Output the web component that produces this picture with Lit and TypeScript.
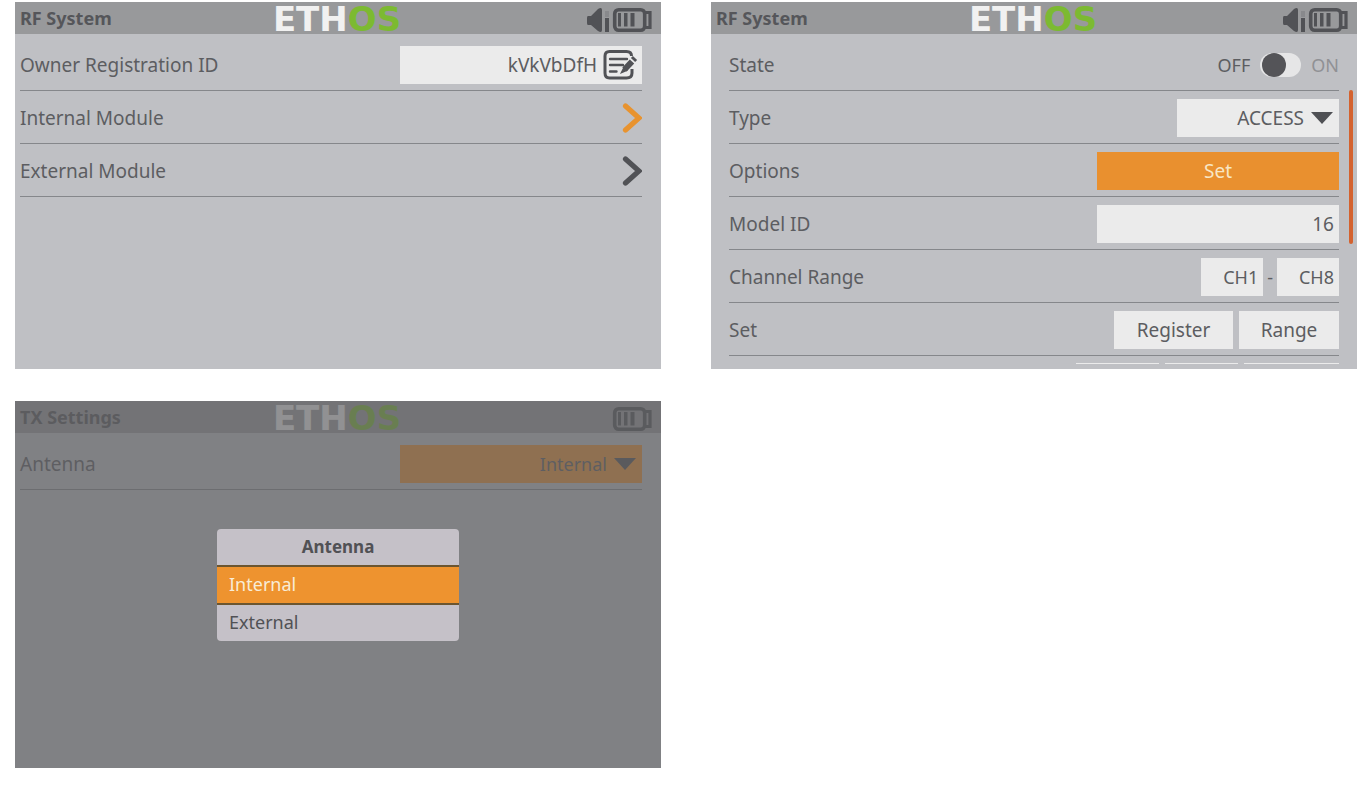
import { LitElement, html, css, svg, nothing } from "lit";
import { customElement, property, state } from "lit/decorators.js";

const controls = css`
  .row {
    box-sizing: border-box;
    display: flex;
    align-items: center;
    justify-content: space-between;
    gap: 6px;
    width: 100%;
    min-height: 53px;
    padding: 8px 0 6px;
    border: 0;
    border-bottom: 1px solid #85878b;
    background: none;
    color: inherit;
    font: inherit;
    text-align: left;
  }
  .label {
    flex: 1;
    font-size: 19px;
  }
  .field,
  .button {
    box-sizing: border-box;
    height: 38px;
    margin: 0;
    border: 0;
    border-radius: 0;
    background: #ebebeb;
    color: #5c5d61;
    font: inherit;
    font-size: 19px;
    outline: none;
  }
  .field {
    padding: 0 5px;
    text-align: right;
  }
  .small {
    font-size: 18px;
  }
  .button {
    padding: 0;
    text-align: center;
  }
  .wide {
    width: 242px;
  }
  .wrap {
    display: grid;
  }
  .wrap > * {
    grid-area: 1 / 1;
  }
  .pick {
    appearance: none;
    padding: 0 35px 0 8px;
    text-align-last: right;
  }
  .caret {
    justify-self: end;
    align-self: center;
    margin-right: 6px;
    pointer-events: none;
  }
  .accent {
    background: #e9902f;
  }
`;

const caret = html`<svg class="caret" width="22" height="12" viewBox="0 0 22 12" aria-hidden="true">
  <path d="M0 0H22L11 12Z" fill="#4f5054" />
</svg>`;

@customElement("device-screen")
class DeviceScreen extends LitElement {
  @property() heading = "";
  @property({ type: Boolean }) muted = false;

  static styles = css`
    :host {
      position: relative;
      display: flex;
      flex-direction: column;
      min-width: 0;
      aspect-ratio: 44 / 25;
      background: #bfc0c4;
    }
    .bar {
      display: grid;
      grid-template-columns: 1fr auto 1fr;
      align-items: center;
      flex: none;
      height: 32px;
      padding: 0 8px 0 5px;
      background: #98999b;
    }
    .title {
      margin: 0;
      font-size: 18px;
      line-height: 24px;
      font-weight: 700;
      color: #55565a;
    }
    .logo {
      font-family: "DejaVu Sans", sans-serif;
      font-size: 34px;
      font-weight: 700;
    }
    .status {
      justify-self: end;
      display: flex;
      align-items: center;
      padding-top: 4px;
    }
  `;

  render() {
    return html`
      <header class="bar">
        <h2 class="title">${this.heading}</h2>
        <svg width="126" height="32" viewBox="0 0 126 32" overflow="visible">
          <text class="logo" x="63" y="29" text-anchor="middle" fill="#f1f1f1">ETH<tspan fill="#7cba31">OS</tspan></text>
        </svg>
        <span class="status">
          <svg width="66" height="26" viewBox="0 0 66 26" aria-hidden="true">
            ${this.muted
              ? nothing
              : svg`<path d="M1 9H4L11 2Q15 -.5 15 3V23Q15 26.500 11 24L4 18H1Q0 18 0 16V11Q0 9 1 9Z" fill="#515256"/>
                <path d="M18 11H22V25H18Z" fill="#515256"/><path d="M18 4H22V10H18Z" fill="#88898c"/>`}
            <rect x="27.700" y="2.700" width="30" height="20.600" rx="4" fill="none" stroke="#515256" stroke-width="3.600" />
            <path d="M58 5.500H63V20.500H58" fill="none" stroke="#515256" stroke-width="3.200" />
            <path d="M31 6H34V19.500H31ZM37 6H40.500V19.500H37ZM43.500 6H47.500V19.500H43.500Z" fill="#515256" />
          </svg>
        </span>
      </header>
      <slot></slot>
    `;
  }
}

@customElement("rf-system")
class RfSystem extends LitElement {
  static styles = [
    controls,
    css`
      :host {
        display: block;
        padding: 4px 19px 0 5px;
      }
      .owner {
        padding-right: 45px;
      }
      .edit {
        justify-self: end;
        align-self: center;
        height: 32px;
        margin-right: 4px;
        padding: 0;
        border: 0;
        background: none;
      }
    `,
  ];

  chevron(color: string) {
    return html`<svg width="20" height="30" viewBox="0 0 20 30" aria-hidden="true">
      <path d="M3.500 3L17 15L3.500 27" fill="none" stroke=${color} stroke-width="5.200" stroke-linecap="round" />
    </svg>`;
  }

  render() {
    return html`
      <div class="row">
        <label class="label" for="owner">Owner Registration ID</label>
        <span class="wrap">
          <input class="field wide owner" id="owner" value="kVkVbDfH" />
          <button class="edit" aria-label="Edit">
            <svg width="35" height="32" viewBox="0 0 35 32" fill="none" stroke="#515256" aria-hidden="true">
              <path d="M28.500 7Q28.500 2.500 23.500 2.500H6.500Q2 2.500 2 7V24Q2 29 6.500 29H23.500Q29 29 29 24V20" stroke-width="3" />
              <path d="M7 10H24M7 16H20M7 22.500H13.500" stroke-width="2.400" stroke-linecap="round" />
              <path d="M21.500 20.500L29 12.500" stroke-width="6" />
              <path d="M18.500 23.500L21 18.500L23.500 21.500Z" fill="#515256" stroke-width="1.500" />
              <path d="M30 11L32 9" stroke-width="6" />
            </svg>
          </button>
        </span>
      </div>
      <button class="row"><span class="label">Internal Module</span>${this.chevron("#e8932f")}</button>
      <button class="row"><span class="label">External Module</span>${this.chevron("#515256")}</button>
    `;
  }
}

@customElement("module-settings")
class ModuleSettings extends LitElement {
  @state() on = false;

  static styles = [
    controls,
    css`
      :host {
        display: block;
        flex: 1;
        min-height: 0;
        margin-bottom: 5px;
        padding: 4px 18px 0;
        overflow: hidden;
      }
      .state {
        display: flex;
        align-items: center;
        gap: 10px;
      }
      .faint {
        color: #909195;
      }
      .toggle {
        appearance: none;
        box-sizing: border-box;
        width: 41px;
        height: 24px;
        margin: 0;
        padding: 0 2px;
        border-radius: 12px;
        background: #e6e6e7;
      }
      .toggle::before {
        content: "";
        display: block;
        width: 24px;
        height: 24px;
        border-radius: 12px;
        background: #545458;
      }
      .toggle:checked::before {
        margin-left: auto;
      }
      .type {
        width: 162px;
      }
      .channels {
        display: flex;
        align-items: center;
        gap: 4px;
      }
      .channel {
        width: 62px;
      }
      .set {
        color: #f8e6c4;
      }
      .register {
        width: 119px;
      }
      .range {
        width: 100px;
      }
      .next {
        padding-top: 5px;
      }
      .bind {
        width: 83px;
      }
      .mid {
        width: 73px;
      }
      .end {
        width: 95px;
      }
      .scroll {
        position: absolute;
        top: 24%;
        right: 4px;
        width: 4px;
        height: 42%;
        border-radius: 2px;
        background: #d4622f;
      }
    `,
  ];

  render() {
    return html`
      <div class="row">
        <label class="label" for="state">State</label>
        <span class="state">
          <span>OFF</span>
          <input class="toggle" id="state" type="checkbox" .checked=${this.on}
            @change=${(e: Event) => (this.on = (e.target as HTMLInputElement).checked)} />
          <span class="faint">ON</span>
        </span>
      </div>
      <div class="row">
        <label class="label" for="type">Type</label>
        <span class="wrap">
          <select class="field pick type" id="type"><option>ACCESS</option></select>
          ${caret}
        </span>
      </div>
      <div class="row">
        <span class="label">Options</span>
        <button class="button wide accent set">Set</button>
      </div>
      <div class="row">
        <label class="label" for="model">Model ID</label>
        <input class="field wide" id="model" value="16" />
      </div>
      <div class="row">
        <label class="label" for="first">Channel Range</label>
        <span class="channels">
          <input class="field small channel" id="first" value="CH1" />
          <span aria-hidden="true">-</span>
          <input class="field small channel" aria-label="Last channel" value="CH8" />
        </span>
      </div>
      <div class="row">
        <span class="label">Set</span>
        <button class="button register">Register</button>
        <button class="button range">Range</button>
      </div>
      <div class="row next">
        <span class="label"></span>
        <button class="button bind" aria-label="Receiver 1"></button>
        <button class="button mid" aria-label="Receiver 2"></button>
        <button class="button end" aria-label="Receiver 3"></button>
      </div>
      <div class="scroll"></div>
    `;
  }
}

@customElement("tx-settings")
class TxSettings extends LitElement {
  @state() choice = "Internal";

  static styles = [
    controls,
    css`
      :host {
        display: block;
        padding: 4px 19px 0 5px;
      }
      .shade {
        position: absolute;
        inset: 0;
        display: grid;
        place-items: center;
        background: rgba(95, 95, 98, 0.66);
      }
      .dialog {
        display: flex;
        flex-direction: column;
        width: 242px;
        overflow: hidden;
        border-radius: 4px;
        background: #c5c1c8;
      }
      .caption {
        margin: 0;
        font-size: 17px;
        line-height: 36px;
        font-weight: 700;
        text-align: center;
        color: #515155;
      }
      .option {
        height: 38px;
        padding: 0 12px 2px;
        border: 0;
        border-top: 2px solid #6b5530;
        background: none;
        font: inherit;
        text-align: left;
        color: #515155;
      }
      .chosen {
        background: #ee932f;
        color: #f8ecd6;
      }
    `,
  ];

  render() {
    return html`
      <div class="row">
        <label class="label" for="antenna">Antenna</label>
        <span class="wrap">
          <select class="field small pick wide accent" id="antenna"><option>${this.choice}</option></select>
          ${caret}
        </span>
      </div>
      <div class="shade">
        <div class="dialog" role="dialog" aria-labelledby="caption">
          <h3 class="caption" id="caption">Antenna</h3>
          ${["Internal", "External"].map(
            (name) => html`<button class="option ${name === this.choice ? "chosen" : ""}"
              @click=${() => (this.choice = name)}>${name}</button>`,
          )}
        </div>
      </div>
    `;
  }
}

@customElement("app-root")
class AppRoot extends LitElement {
  static styles = css`
    :host {
      display: grid;
      grid-template-columns: 1fr 1fr;
      gap: 32px 50px;
      align-items: start;
      padding: 2px 5px 20px 15px;
      background: #fff;
      font-family: "Noto Sans", sans-serif;
      font-size: 18px;
      line-height: 24px;
      color: #5c5d61;
    }
  `;

  render() {
    return html`
      <device-screen heading="RF System"><rf-system></rf-system></device-screen>
      <device-screen heading="RF System"><module-settings></module-settings></device-screen>
      <device-screen heading="TX Settings" muted><tx-settings></tx-settings></device-screen>
    `;
  }
}
